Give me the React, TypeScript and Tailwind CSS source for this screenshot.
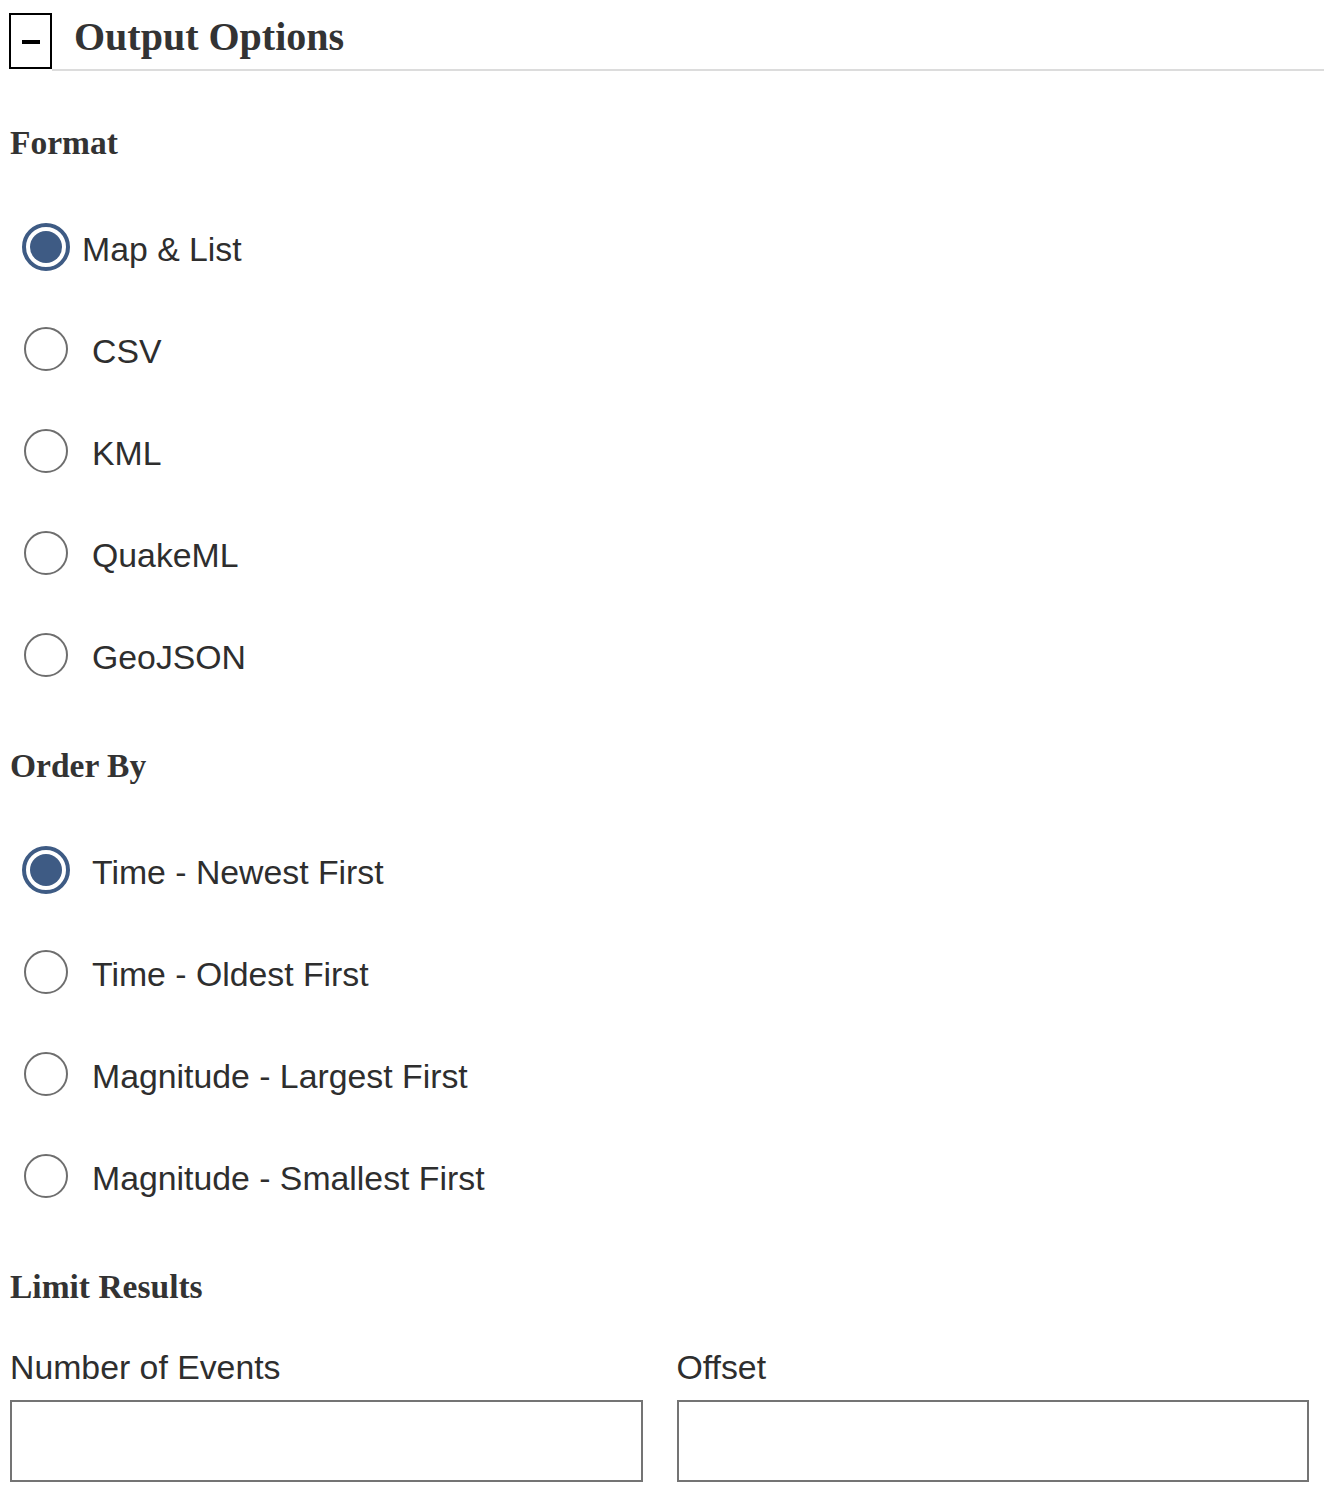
import React from "react";

const serif = "font-['Liberation_Serif','Times_New_Roman',serif]";
const sans = "font-['Liberation_Sans',Arial,sans-serif]";

type Option = { label: string; checked?: boolean; tight?: boolean };

const formats: Option[] = [
  { label: "Map & List", checked: true, tight: true },
  { label: "CSV" },
  { label: "KML" },
  { label: "QuakeML" },
  { label: "GeoJSON" },
];

const orderings: Option[] = [
  { label: "Time - Newest First", checked: true },
  { label: "Time - Oldest First" },
  { label: "Magnitude - Largest First" },
  { label: "Magnitude - Smallest First" },
];

function Radio({ checked }: { checked?: boolean }) {
  return (
    <span className="flex h-12 w-12 shrink-0 items-center justify-center">
      {checked ? (
        <span className="flex h-12 w-12 items-center justify-center rounded-full border-4 border-[#3e5b84] bg-white">
          <span className="h-8 w-8 rounded-full bg-[#3e5b84]" />
        </span>
      ) : (
        <span className="h-11 w-11 rounded-full border-2 border-[#6e6e6e] bg-white" />
      )}
    </span>
  );
}

function RadioGroup({ options }: { options: Option[] }) {
  return (
    <div className="mt-[33px] flex flex-col">
      {options.map((o) => (
        <label key={o.label} className="flex h-[102px] items-center pl-[22px]">
          <Radio checked={o.checked} />
          <span
            className={`${sans} mt-[4px] text-[33.8px] leading-[40px] text-[#2e2e2e] ${o.tight ? "ml-[12px]" : "ml-[22px]"}`}
          >
            {o.label}
          </span>
        </label>
      ))}
    </div>
  );
}

function Heading({ children, first }: { children: React.ReactNode; first?: boolean }) {
  return (
    <h3
      className={`${serif} pl-[10px] text-[33.5px] leading-[40px] font-bold text-[#333] ${first ? "mt-[52px]" : "mt-[40px]"}`}
    >
      {children}
    </h3>
  );
}

export default function App() {
  return (
    <div className="min-h-[1496px] w-[1324px] bg-white pb-4">
      {/* section header with collapse toggle */}
      <div className="flex items-start pt-[13px]">
        <button className="ml-[9px] flex h-[56px] w-[43px] shrink-0 items-center justify-center border-2 border-black bg-white">
          <span className="mt-[1px] h-[4px] w-[18px] bg-black" />
        </button>
        <div className="h-[58px] flex-1 border-b-2 border-[#dcdcdc] pt-[4px] pl-[22px]">
          <h2 className={`${serif} text-[40px] leading-[40px] font-bold text-[#333]`}>Output Options</h2>
        </div>
      </div>

      <Heading first>Format</Heading>
      <RadioGroup options={formats} />

      <Heading>Order By</Heading>
      <RadioGroup options={orderings} />

      <Heading>Limit Results</Heading>
      <div className="mt-[40px] grid grid-cols-2 gap-[34px] pr-[15px] pl-[10px]">
        {["Number of Events", "Offset"].map((label) => (
          <label key={label} className="flex flex-col">
            <span className={`${sans} text-[33.8px] leading-[40px] text-[#2e2e2e]`}>{label}</span>
            <input
              type="text"
              className={`${sans} mt-[13px] h-[82px] w-full border-2 border-[#747474] bg-white px-3 text-[33px] outline-none`}
            />
          </label>
        ))}
      </div>
    </div>
  );
}
